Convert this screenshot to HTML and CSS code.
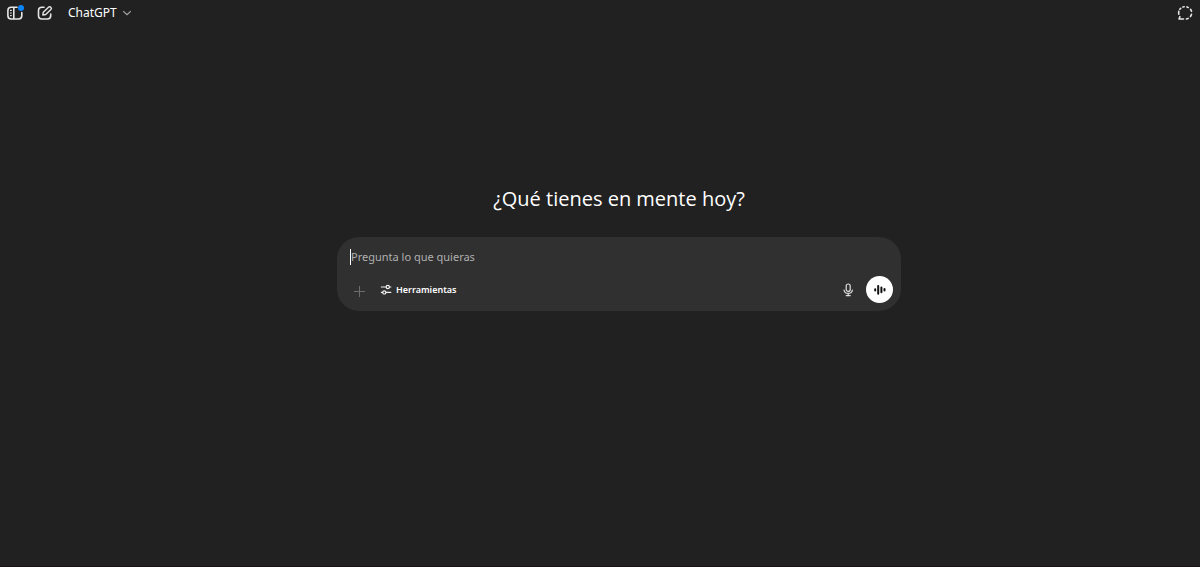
FILE: index.html
```html
<!DOCTYPE html>
<html lang="es">
<head>
	<meta charset="UTF-8">
	<meta name="viewport" content="width=device-width, initial-scale=1">
	<title>ChatGPT</title>
	<link rel="stylesheet" href="styles.css">
</head>
<body>
	<header class="topbar">
		<button type="button" class="icon-btn sidebar-btn" aria-label="Abrir barra lateral">
			<svg width="18" height="18" viewBox="0 0 18 18" fill="none" stroke="#e6e6e6" stroke-width="1.6" stroke-linecap="round">
				<path d="M11 3.3H5.2Q1.9 3.3 1.9 6.6v5.2Q1.9 15 5.2 15h7.3Q15.8 15 15.8 11.8V8.5M7.8 3.3V15"/>
				<path stroke-width="1.2" d="M4.5 6.4h.8M4.5 9h.8M4.5 11.6h.8"/>
			</svg>
			<span class="dot"></span>
		</button>
		<button type="button" class="icon-btn" aria-label="Nuevo chat">
			<svg width="18" height="18" viewBox="0 0 18 18" fill="none" stroke="#e6e6e6" stroke-width="1.6" stroke-linecap="round" stroke-linejoin="round">
				<path d="M8 3.3H6Q2.5 3.3 2.5 6.6v5.2Q2.5 15 6 15h5.4Q14.7 15 14.7 11.8V10"/>
				<path stroke-width="1.4" d="M6.8 11l.5-2.8 5.2-5a1.6 1.6 0 0 1 2.4 2.3l-5.2 5z"/>
			</svg>
		</button>
		<button type="button" class="model-btn">
			ChatGPT
			<svg width="10" height="10" viewBox="0 0 10 10" fill="none" stroke="#a0a0a0" stroke-width="1.2" stroke-linecap="round" stroke-linejoin="round">
				<path d="M1.5 3.4L5 6.7l3.5-3.3"/>
			</svg>
		</button>
		<button type="button" class="icon-btn temp-btn" aria-label="Chat temporal">
			<svg width="18" height="18" viewBox="0 0 18 18" fill="none" stroke="#e6e6e6" stroke-width="1.6" stroke-linecap="round" stroke-linejoin="round">
				<path d="M7 3.1Q8 2.8 8.2 2.8M11 2.9L12.2 3.4M14.5 5.3Q15.2 6.2 15.5 7.2M15.5 10.3Q15.2 11.6 14.5 12.5M12.2 14.4Q11.3 14.9 10.4 15M7.5 15H3l.9-2.3M2.8 10.2Q2.5 8.8 2.8 7.4M3.8 5.3L4.7 4.4"/>
			</svg>
		</button>
	</header>

	<main class="content">
		<h1 class="greeting">¿Qué tienes en mente hoy?</h1>
		<form class="composer">
			<div class="prompt">
				<input type="text" class="prompt-input" aria-label="Mensaje" placeholder="Pregunta lo que quieras">
			</div>
			<div class="tools">
				<button type="button" class="icon-btn" aria-label="Añadir">
					<svg width="18" height="18" viewBox="0 0 18 18" fill="none" stroke="#6c6c6c" stroke-width="1">
						<path d="M4 10.5h11M9.5 5v11"/>
					</svg>
				</button>
				<button type="button" class="tools-btn">
					<svg width="12" height="12" viewBox="0 0 12 12" fill="none" stroke="#f0f0f0" stroke-width="1.2" stroke-linecap="round">
						<path d="M1.4 3h4.4M9.6 3h1.2M1.4 8.4h1.2M6.2 8.4h4.6"/>
						<circle cx="7.8" cy="3" r="1.6"/>
						<circle cx="4.3" cy="8.4" r="1.6"/>
					</svg>
					Herramientas
				</button>
				<button type="button" class="icon-btn mic-btn" aria-label="Dictar">
					<svg width="18" height="18" viewBox="0 0 18 18" fill="none" stroke="#e0e0e0" stroke-width="1.2" stroke-linecap="round">
						<rect x="7.2" y="3" width="4" height="7.4" rx="2"/>
						<path d="M5 9Q5.5 12.4 9.2 12.4T13.4 9M9.2 12.4V14.6M7.2 14.6h4"/>
					</svg>
				</button>
				<button type="button" class="voice-btn" aria-label="Modo de voz">
					<svg width="14" height="14" viewBox="0 0 14 14" fill="none" stroke="#111" stroke-width="2" stroke-linecap="round">
						<path d="M2.2 6.2v1.2M5.2 3v7.8M8.4 4.6v4.6M11.5 6v1.6"/>
					</svg>
				</button>
			</div>
		</form>
	</main>
</body>
</html>
```

FILE: styles.css
```css
* {
	box-sizing: border-box;
	margin: 0;
	padding: 0;
}
body {
	display: flex;
	flex-direction: column;
	min-height: 100vh;
	background: #212121;
	border-bottom: 1px solid #171315;
	color: #fff;
	font-family: "Noto Sans", "Open Sans", sans-serif;
}
button {
	display: flex;
	align-items: center;
	background: none;
	border: none;
	color: inherit;
	font-family: inherit;
	cursor: pointer;
}
svg {
	display: block;
}

/* top bar */
.topbar {
	display: flex;
	align-items: center;
	gap: 12px;
	height: 26px;
	padding: 0 6px;
}
.icon-btn {
	position: relative;
}
.dot {
	position: absolute;
	top: 1px;
	right: 0;
	width: 6px;
	height: 6px;
	border-radius: 50%;
	background: #0a84ff;
}
.model-btn {
	gap: 5px;
	padding-left: 2px;
	font-size: 12px;
	line-height: 16px;
}
.temp-btn {
	margin-left: auto;
}

/* prompt */
.content {
	display: flex;
	flex-direction: column;
	align-items: center;
	padding: 159px 0 0 38px;
}
.greeting {
	font-family: "Open Sans", "Noto Sans", sans-serif;
	font-size: 20px;
	font-weight: 400;
	line-height: 28px;
}
.composer {
	width: 47vw;
	min-width: 300px;
	margin-top: 24px;
	padding: 12px 8px 8px 13px;
	border-radius: 22px;
	background: #303030;
}
.prompt {
	border-left: 1px solid #fff;
}
.prompt-input {
	display: block;
	width: 100%;
	height: 16px;
	background: none;
	border: none;
	outline: none;
	color: #fff;
	font-family: inherit;
	font-size: 11px;
	line-height: 16px;
}
.prompt-input::placeholder {
	color: #afafaf;
}
.tools {
	display: flex;
	align-items: center;
	height: 27px;
	margin-top: 11px;
}
.tools-btn {
	gap: 4px;
	margin-left: 12px;
	font-size: 9px;
	font-weight: 600;
	line-height: 16px;
}
.mic-btn {
	margin-left: auto;
}
.voice-btn {
	justify-content: center;
	width: 27px;
	height: 27px;
	margin-left: 9px;
	border-radius: 50%;
	background: #fff;
}
```
